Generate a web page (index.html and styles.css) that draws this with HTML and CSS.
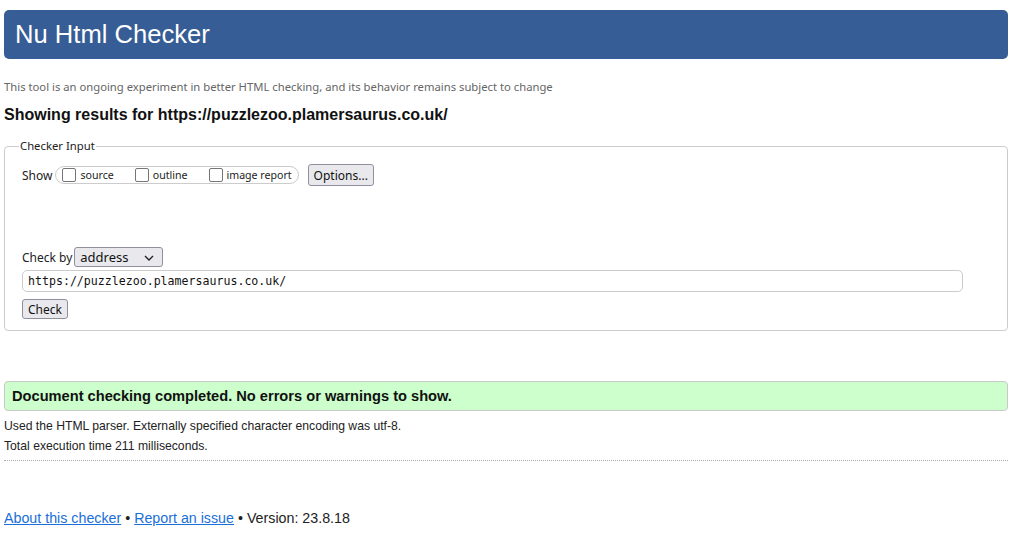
FILE: index.html
```html
<!DOCTYPE html>
<html lang="en">
<head>
<meta charset="utf-8">
<title>Nu Html Checker</title>
<link rel="stylesheet" href="styles.css">
</head>
<body>
<h1 class="title">Nu Html Checker</h1>
<p class="tagline">This tool is an ongoing experiment in better HTML checking, and its behavior remains subject to change</p>
<h2 class="showing">Showing results for https://puzzlezoo.plamersaurus.co.uk/</h2>
<fieldset class="input-box">
  <legend class="legend">Checker Input</legend>
  <div class="show-row">
    <span class="ui-label">Show</span>
    <div class="show-group">
      <label class="chk"><input type="checkbox" class="box"><span>source</span></label>
      <label class="chk"><input type="checkbox" class="box"><span>outline</span></label>
      <label class="chk"><input type="checkbox" class="box"><span>image report</span></label>
    </div>
    <button class="btn btn-options" type="button">Options...</button>
  </div>
  <div class="checkby-row">
    <span class="ui-label">Check by</span>
    <div class="select">
      <span>address</span>
      <svg class="chev" width="10" height="6" viewBox="0 0 10 6"><path d="M1 1 L5 5 L9 1" fill="none" stroke="#222" stroke-width="1.4"/></svg>
    </div>
  </div>
  <div class="url">https://puzzlezoo.plamersaurus.co.uk/</div>
  <button class="btn btn-check" type="button">Check</button>
</fieldset>
<div class="success">Document checking completed. No errors or warnings to show.</div>
<p class="info info-first">Used the HTML parser. Externally specified character encoding was utf-8.</p>
<p class="info">Total execution time 211 milliseconds.</p>
<hr class="dots">
<p class="footer"><a href="#">About this checker</a> • <a href="#">Report an issue</a> • Version: 23.8.18</p>
</body>
</html>
```
FILE: styles.css
```css
html, body { background: #fff; }
body {
  margin: 0 17px 0 4px;
  font-family: "Liberation Sans", Arial, sans-serif;
  color: #1a1a1a;
}
.title {
  margin: 10px 0 0 0;
  height: 49px;
  box-sizing: border-box;
  background: #365d95;
  color: #fff;
  border-radius: 5px;
  font-weight: normal;
  font-size: 25.6px;
  line-height: 49px;
  padding-left: 11px;
}
.tagline {
  margin: 20px 0 0 0;
  font-family: "Noto Sans", "Open Sans", sans-serif;
  font-size: 11.27px;
  line-height: 16px;
  color: #666;
}
.showing {
  margin: 10px 0 0 0;
  font-size: 16px;
  line-height: 20px;
  font-weight: bold;
  color: #111;
}
.input-box {
  margin: 14px 0 0 0;
  border: 1px solid #ccc;
  border-radius: 4px;
  padding: 0 0 11px 17px;
  height: 192px;
  box-sizing: border-box;
  display: flex;
  flex-direction: column;
  align-items: flex-start;
  font-family: "Noto Sans", "Open Sans", sans-serif;
  font-size: 12px;
  color: #222;
}
.legend {
  padding: 0 1px;
  margin-left: -3px;
  font-size: 11.3px;
  line-height: 14px;
}
.show-row {
  display: flex;
  align-items: center;
  margin-top: 11px;
  height: 22px;
}
.ui-label { font-size: 12px; }
.show-group {
  display: flex;
  align-items: center;
  margin-left: 3px;
  height: 18px;
  box-sizing: border-box;
  border: 1px solid #ccc;
  border-radius: 9px;
  padding: 0 6px 0 6px;
  font-size: 10.6px;
}
.chk { display: flex; align-items: center; margin-right: 21px; }
.chk:last-child { margin-right: 0; }
.box {
  appearance: none;
  -webkit-appearance: none;
  width: 14px;
  height: 14px;
  margin: 0 4px 0 0;
  border: 1.5px solid #767676;
  border-radius: 2px;
  background: #fff;
  box-sizing: border-box;
}
.btn {
  appearance: none;
  font-family: "Noto Sans", "Open Sans", sans-serif;
  font-size: 12px;
  color: #111;
  background: #e9e9ed;
  border: 1px solid #8f8f9d;
  border-radius: 3px;
  padding: 0 5px;
  box-sizing: border-box;
}
.btn-options { margin-left: 9px; height: 22px; }
.checkby-row {
  display: flex;
  align-items: center;
  margin-top: 61px;
}
.select {
  position: relative;
  margin-left: 2px;
  width: 89px;
  height: 20px;
  box-sizing: border-box;
  background: #e9e9ed;
  border: 1px solid #8f8f9d;
  border-radius: 3px;
  display: flex;
  align-items: center;
  padding-left: 5px;
  font-size: 13px;
  color: #111;
}
.chev { position: absolute; right: 8px; top: 7px; }
.url {
  margin-top: 3px;
  width: 941px;
  height: 22px;
  box-sizing: border-box;
  border: 1px solid #ccc;
  border-radius: 5px;
  padding-left: 5px;
  font-family: "DejaVu Sans Mono", "Liberation Mono", monospace;
  font-size: 11.6px;
  line-height: 20px;
  color: #111;
}
.btn-check { margin-top: 7px; height: 21px; font-size: 12px; padding: 0 5px; width: 46px; }
.success {
  margin-top: 50px;
  height: 30px;
  box-sizing: border-box;
  background: #ccffcc;
  border: 1px solid #c8c8c8;
  border-radius: 4px;
  padding-left: 7px;
  font-size: 14.63px;
  font-weight: bold;
  line-height: 28px;
  color: #111;
}
.info {
  margin: 6px 0 0 0;
  font-size: 12.2px;
  line-height: 14px;
  color: #222;
}
.info-first { margin-top: 8px; }
.dots {
  margin: 7px 0 0 0;
  border: 0;
  border-top: 1px dotted #aaa;
  height: 0;
}
.footer {
  margin: 48px 0 0 0;
  font-size: 14.25px;
  line-height: 18px;
  color: #222;
}
.footer a { color: #1a6fd8; }
```
